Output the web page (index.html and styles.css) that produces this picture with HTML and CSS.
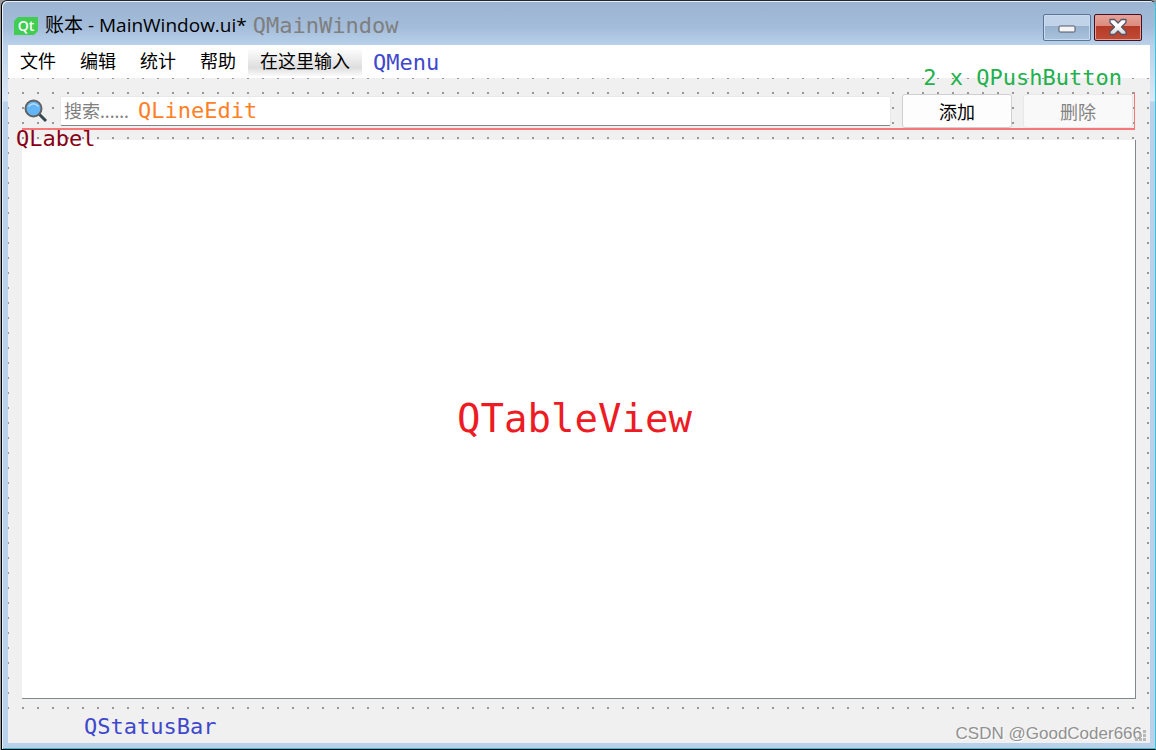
FILE: index.html
```html
<!DOCTYPE html>
<html lang="zh-CN">
<head>
<meta charset="utf-8">
<title>账本 - MainWindow.ui*</title>
<link rel="stylesheet" href="styles.css">
</head>
<body>
<div class="window">
  <header class="titlebar">
    <svg class="logo" viewBox="0 0 24 18" role="img" aria-label="Qt">
      <path d="M4 0H24V14L20 18H0V4Z" fill="#41cd52"/>
      <text x="12" y="14" text-anchor="middle" class="logo-text">Qt</text>
    </svg>
    <h1 class="title">账本 - MainWindow.ui*</h1>
    <span class="note note-window">QMainWindow</span>
    <div class="window-buttons">
      <button class="win-btn minimize" aria-label="最小化">
        <svg viewBox="0 0 18 8" width="18" height="8"><rect x="1" y="1" width="16" height="6" rx="1" fill="#f5f5f5" stroke="#535666"/></svg>
      </button>
      <button class="win-btn close" aria-label="关闭">
        <svg viewBox="0 0 20 18" width="20" height="18"><defs><linearGradient id="x" x2="0" y2="1"><stop offset=".4" stop-color="#fff"/><stop offset="1" stop-color="#d4d4d4"/></linearGradient></defs><path d="M2 1.500H6.500L10 5L13.500 1.500H18V4.500L13.500 9L18 13.500V16.500H13.500L10 13L6.500 16.500H2V13.500L6.500 9L2 4.500Z" fill="url(#x)" stroke="#535666" stroke-width="1.300" stroke-linejoin="round"/></svg>
      </button>
    </div>
  </header>
  <div class="client">
    <nav class="menubar">
      <button class="menu">文件</button>
      <button class="menu">编辑</button>
      <button class="menu">统计</button>
      <button class="menu">帮助</button>
      <button class="menu menu-new">在这里输入</button>
      <span class="note note-menu">QMenu</span>
    </nav>
    <main class="central">
      <div class="search-row">
        <label class="search-label" for="search" aria-label="搜索">
          <svg viewBox="0 0 24 24" width="24" height="24"><path d="M15 15L22 22" stroke="#37474f" stroke-width="3"/><circle cx="9.500" cy="9.500" r="8" fill="#64b5f6" stroke="#616161" stroke-width="2"/><path d="M5 7Q9.500 2.500 14 7" fill="none" stroke="#bbdefb" stroke-width="1.500" stroke-linecap="round"/></svg>
        </label>
        <input class="search" id="search" type="text" placeholder="搜索......">
        <button class="push">添加</button>
        <button class="push" disabled>删除</button>
        <span class="note note-edit">QLineEdit</span>
        <span class="note note-label">QLabel</span>
        <span class="note note-push">2 x QPushButton</span>
      </div>
      <section class="table-view"><span class="note note-table">QTableView</span></section>
    </main>
    <footer class="statusbar">
      <span class="note note-status">QStatusBar</span>
      <span class="watermark">CSDN @GoodCoder666</span>
      <svg class="grip" viewBox="0 0 11 11" width="11" height="11" fill="#b8b8b8"><path d="M8 0h3v3h-3zM4 4h3v3h-3zM8 4h3v3h-3zM0 8h3v3h-3zM4 8h3v3h-3zM8 8h3v3h-3z"/></svg>
    </footer>
  </div>
</div>
</body>
</html>
```
FILE: styles.css
```css
* { box-sizing: border-box; }

body {
  margin: 0;
  background: #999;
  font-family: "Noto Sans", "Noto Sans CJK SC", sans-serif;
  font-size: 18px;
  color: #000;
}

button, input { font: inherit; margin: 0; }

.window {
  display: flex;
  flex-direction: column;
  min-height: 100vh;
  margin-left: 1px;
  padding: 0 5px 6px;
  border: 1px solid #000;
  border-top-color: #25252d;
  border-right-color: #35c5df;
  border-radius: 6px 6px 0 0;
  background: linear-gradient(#9ab4d2 0, #a3bcda 26px, #b9d1ea 44px, #dce8f6 100px, #b9d1ea 101px);
  box-shadow: inset 1px 1px #e8f1fa, inset 0 -1px #26c3df;
}

.titlebar {
  display: flex;
  align-items: center;
  height: 44px;
  padding: 4px 8px 0 7px;
}

.logo { width: 24px; height: 18px; margin-top: 2px; }

.logo-text {
  font: 600 14px "Open Sans", sans-serif;
  fill: #fff;
}

.title {
  margin: 0 0 0 7px;
  font-size: 19px;
  line-height: 24px;
  font-weight: 400;
  font-family: "Open Sans", "Noto Sans CJK SC", sans-serif;
}

.note {
  font-family: "DejaVu Sans Mono", monospace;
  font-size: 22px;
  line-height: 24px;
  white-space: nowrap;
}

.note-window { margin-left: 6px; padding-top: 2px; color: #7f7f7f; }

.window-buttons { display: flex; gap: 3px; margin: 4px 0 0 auto; }

.win-btn {
  display: flex;
  align-items: center;
  justify-content: center;
  width: 48px;
  height: 27px;
  padding: 0;
  border: 1px solid #5f7494;
  border-radius: 2px;
}

.minimize {
  padding-top: 4px;
  background: linear-gradient(#c0d3e9 0 11px, #98b1ce 11px, #a9c3de);
  box-shadow: inset 0 0 0 1px #c9dbee;
}

.close {
  border-color: #44101f;
  background: linear-gradient(#e7a399, #db8a7e 11px, #b43a27 11px, #c14c35);
  box-shadow: inset 0 0 0 1px #e3a096;
}

.client {
  display: flex;
  flex: 1;
  flex-direction: column;
  margin: 0 0 0 1px;
  background: #f0f0f0;
}

.menubar {
  display: flex;
  align-items: center;
  height: 33px;
  background: #fff;
}

.menu {
  height: 28px;
  padding: 0 12px 2px;
  border: 0;
  background: none;
  line-height: 26px;
}

.menu-new { background: linear-gradient(#fff, #dedede 70%, #fafafa); }

.note-menu { margin-left: 11px; padding-top: 2px; color: #3f48cc; }

.central {
  display: flex;
  flex: 1;
  flex-direction: column;
  gap: 10px;
  padding: 14px 14px 11px;
  background: conic-gradient(from 270deg at 2px 2px, #989898 90deg, transparent 0) 14px 14px / 15px 15px;
}

.search-row {
  position: relative;
  display: flex;
  align-items: center;
  height: 38px;
  margin-right: 1px;
  padding: 2px 1px 0 0;
  border-right: 1px solid #f87878;
  border-bottom: 2px solid #f87878;
}

.search-label { display: flex; width: 38px; padding-left: 2px; }

.search {
  flex: 1;
  min-width: 0;
  height: 30px;
  margin-right: 11px;
  padding: 0 3px;
  border: 1px solid #e8e8e8;
  border-bottom-color: #868686;
  border-radius: 2px;
  background: #fff;
}

.search::placeholder { color: #7f7f7f; opacity: 1; }

.push {
  width: 110px;
  height: 34px;
  padding: 0;
  border: 1px solid #d0d0d0;
  border-radius: 3px;
  background: #fdfdfd;
  color: #000;
}

.push + .push { margin-left: 11px; }

.push:disabled { border-color: #e8e8e8; background: #f9f9f9; color: #838383; }

.note-edit, .note-label, .note-push { position: absolute; }

.note-edit { left: 116px; top: 7px; color: #ff7f27; }

.note-label { left: -6px; top: 35px; color: #880015; }

.note-push { right: 12px; top: -26px; color: #22b14c; }

.table-view {
  display: flex;
  flex: 1;
  align-items: center;
  justify-content: center;
  padding-right: 8px;
  border-right: 1px solid #828790;
  border-bottom: 1px solid #828790;
  background: #fff;
}

.note-table { font-size: 39px; line-height: 48px; color: #ed1c24; }

.statusbar {
  position: relative;
  display: flex;
  align-items: center;
  height: 33px;
  padding: 0 8px 0 76px;
}

.note-status { color: #3f48cc; }

.watermark {
  margin: 14px 0 0 auto;
  font-family: "Liberation Sans", Arial, sans-serif;
  font-size: 17px;
  color: #909090;
  text-shadow: 1px 1px #fff;
}

.grip { position: absolute; right: 4px; bottom: 2px; }
```
